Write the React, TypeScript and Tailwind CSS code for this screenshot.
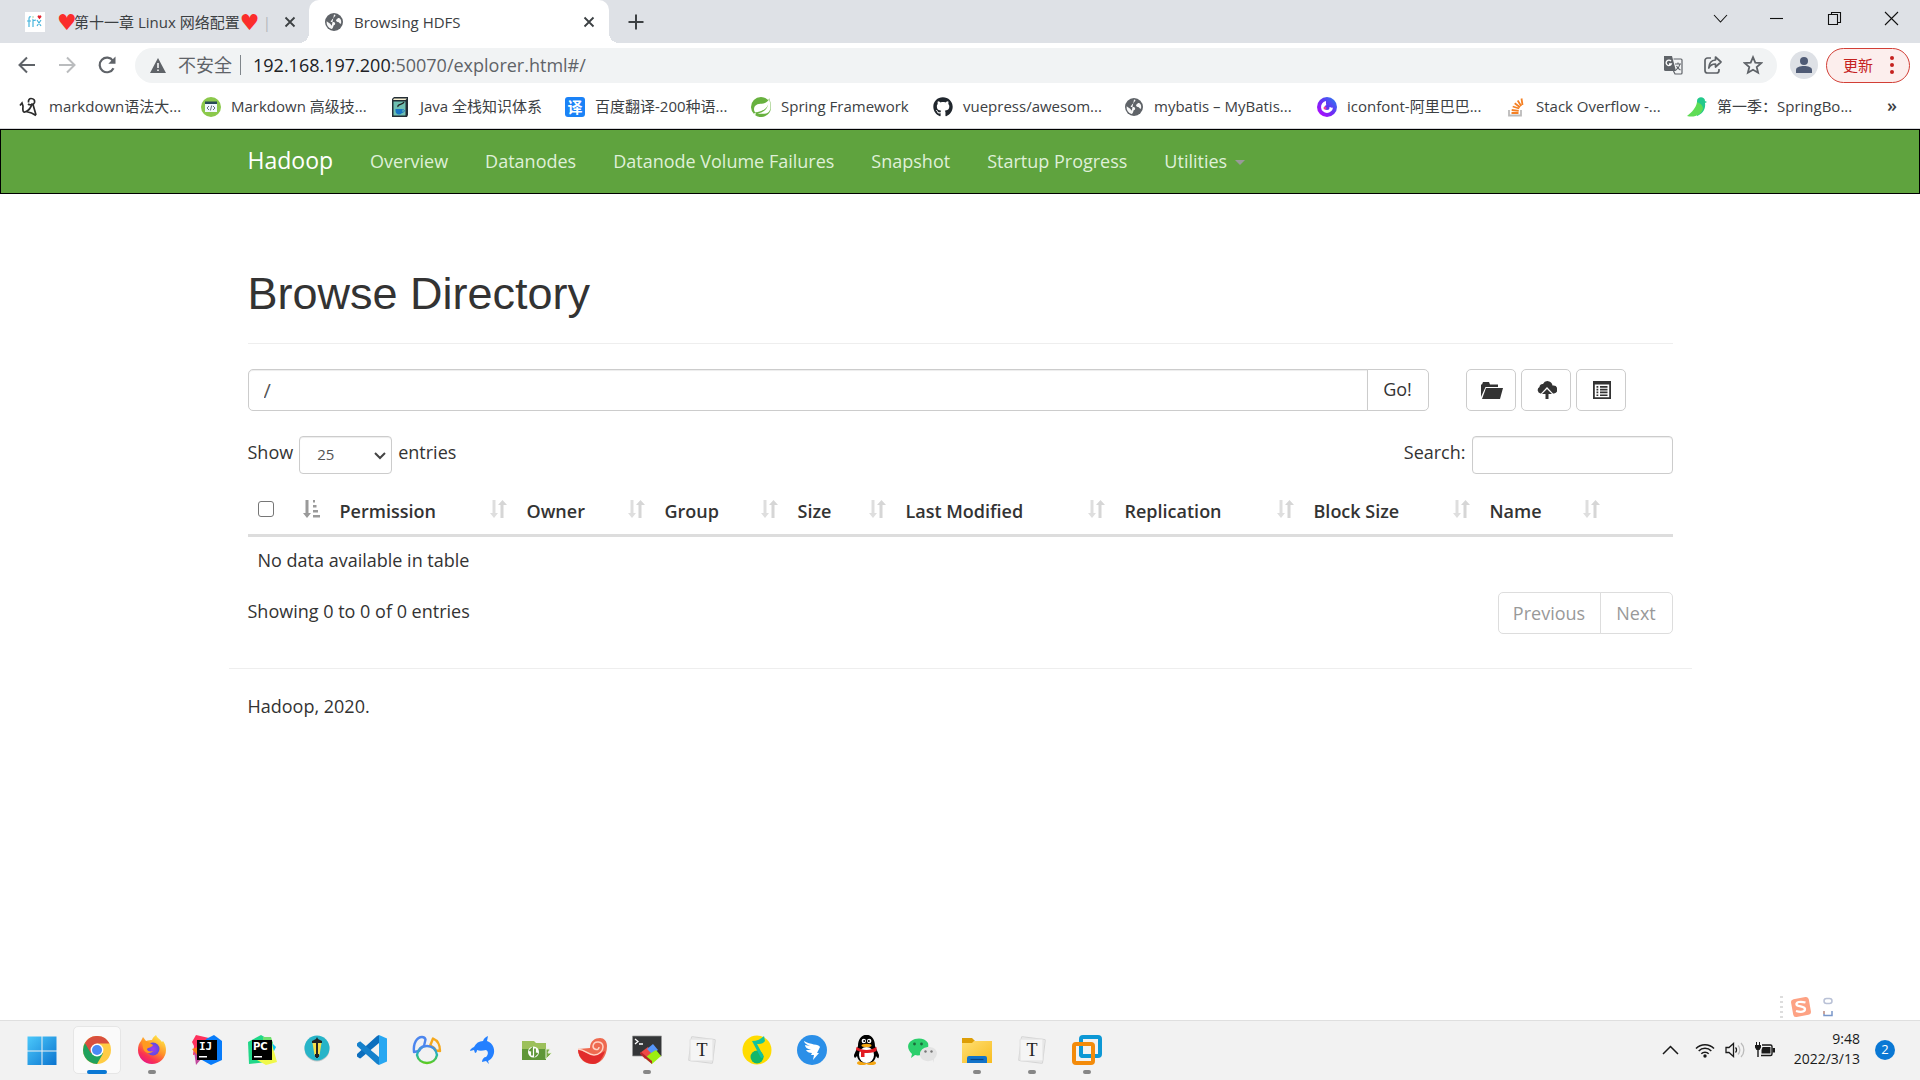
import type { ReactNode } from "react";
import { FaGithub } from "react-icons/fa";
import { SiSpring } from "react-icons/si";

const uiFont = "font-['Open_Sans','Noto_Sans_CJK_SC',sans-serif]";

function Globe() {
  return (
    <svg viewBox="0 0 20 20" className="size-5">
      <circle cx="10" cy="10" r="9" fill="#5f6368" />
      <path d="M10 2.6c2.2.2 1.5 1.8.3 2.3-1 .5-.2 1.6-1.5 1.9-1.2.4-.5 1.7-1.7 1.9-1 .2-.2 1.500 1 1.400 1.500-.1 3 .3 3.100 1.600.1 1.200-1.600 1.200-1.800 2.200-.2 1.300-.9 2.900-2 3A7.500 7.500 0 0 1 2.600 9.300l3.600 2.500c.8.6.6 1.600 1.600 1.800" fill="#fff" opacity=".95" />
      <path d="M13.600 6.400c1.200-.9 2-.3 2.900.8.8 1.300.9 3.200.4 4.500-1.300.3-1.500-1.600-3-1.700-1.400-.2-2.200-1.300-1.700-2.200.3-.7 1-.8 1.400-1.400z" fill="#fff" opacity=".95" />
    </svg>
  );
}

function CloseIcon() {
  return (
    <svg viewBox="0 0 12 12" className="size-3" stroke="#3c4043" strokeWidth="1.8" fill="none">
      <path d="M1.5 1.5l9 9M10.5 1.5l-9 9" />
    </svg>
  );
}

function Heart() {
  return <span className="w-[17px] text-center font-['DejaVu_Sans',sans-serif] text-[22px] leading-5 text-[#fb2d2b]">♥</span>;
}

function TabStrip() {
  return (
    <header className="flex h-[43px] bg-[#dee1e6] text-[15px] text-[#3c4043]">
      <div className="flex w-[309px] items-center pl-[25px]">
        <svg viewBox="0 0 20 20" className="size-5 shrink-0">
          <rect width="20" height="20" fill="#fff" />
          <path d="M6 5C4 4 4 6 4 8v7M2 9h4M8 15V8c1 1 2 0 3 0M12 8l4 6M16 8l-4 6" fill="none" stroke="#46b4dc" strokeWidth="1.2" />
          <path d="M14.5 7.2L12.8 5.200a1.100 1.100 0 0 1 1.700-1.400 1.100 1.100 0 0 1 1.700 1.400z" fill="#e2202c" />
          <circle cx="8" cy="5" r=".8" fill="#9dd28e" />
        </svg>
        <div className="ml-3 flex flex-1 items-center whitespace-nowrap pt-0.5">
          <Heart />
          <span>第十一章 Linux 网络配置</span>
          <Heart />
          <span className="pl-1.5 text-[#b3b6bb]">|</span>
        </div>
        <button aria-label="Close tab" className="mr-[13px]"><CloseIcon /></button>
      </div>
      <div className="relative flex w-[300px] items-center rounded-t-[10px] bg-white pl-[15px]">
        <span className="absolute bottom-0 -left-2.5 size-2.5 bg-[radial-gradient(circle_at_0_0,transparent_10px,white_10px)]" />
        <span className="absolute -right-2.5 bottom-0 size-2.5 bg-[radial-gradient(circle_at_100%_0,transparent_10px,white_10px)]" />
        <Globe />
        <span className="ml-2.5 flex-1 pt-0.5">Browsing HDFS</span>
        <button aria-label="Close tab" className="mr-[14px]"><CloseIcon /></button>
      </div>
      <button aria-label="New tab" className="ml-[19px]">
        <svg viewBox="0 0 16 16" className="size-4" stroke="#3c4043" strokeWidth="2"><path d="M8 .5v15M.5 8h15" /></svg>
      </button>
      <div className="ml-auto flex pb-1.5">
        {[
          ["Search tabs", "M1 5l6.500 7L14 5"],
          ["Minimize", "M0 8.500h13"],
          ["Restore", "M1.500 4.500h9v10h-9zM4.500 4.500v-2h9v10h-3"],
          ["Close", "M1 2l13 13M14 2L1 15"],
        ].map(([name, d]) => (
          <button key={name} aria-label={name} className="grid w-[57px] place-items-center">
            <svg viewBox="0 0 15 17" className="h-[17px] w-[15px]" fill="none" stroke="#111" strokeWidth="1.1"><path d={d} /></svg>
          </button>
        ))}
      </div>
    </header>
  );
}

function Toolbar() {
  return (
    <div className="flex h-11 items-center bg-white pr-2.5 pl-[17px] text-[#5f6368]">
      <button aria-label="Back" className="mr-5">
        <svg viewBox="0 0 20 20" className="size-5" fill="none" stroke="#5f6368" strokeWidth="2"><path d="M18 10H3M10 2.500L2.500 10l7.500 7.500" /></svg>
      </button>
      <button aria-label="Forward" className="mr-5">
        <svg viewBox="0 0 20 20" className="size-5" fill="none" stroke="#babcbe" strokeWidth="2"><path d="M2 10h15M10 2.500l7.500 7.500-7.500 7.500" /></svg>
      </button>
      <button aria-label="Reload" className="mr-[18px]">
        <svg viewBox="0 0 20 20" className="size-5" fill="none" stroke="#5f6368" strokeWidth="2.200">
          <path d="M16.500 13.200A7.300 7.300 0 1 1 16 5.800" /><path d="M18.500 1.500v7.200h-7.200z" fill="#5f6368" stroke="none" />
        </svg>
      </button>
      <div className="flex h-[35px] flex-1 items-center rounded-full bg-[#f1f3f4] pl-[15px] text-lg">
        <svg viewBox="0 0 16 15" className="h-[15px] w-4 shrink-0"><path d="M8 0l8 15H0z" fill="#5f6368" /><path d="M8 5v5M8 11.500v1.600" stroke="#fff" strokeWidth="1.500" /></svg>
        <span className="ml-3">不安全</span>
        <span className="mx-2 h-5 w-px bg-[#80868b]" />
        <label htmlFor="url" className="ml-1 text-[#202124]">192.168.197.200</label>
        <input id="url" defaultValue=":50070/explorer.html#/" className="min-w-0 flex-1 bg-transparent outline-none" />
        <button aria-label="Translate" className="mr-5">
          <svg viewBox="0 0 20 20" className="size-5">
            <path d="M1 1h8l4 15H2.500A1.500 1.500 0 0 1 1 14.500z" fill="#5f6368" />
            <path d="M10.500 4H18a1 1 0 0 1 1 1v13a1 1 0 0 1-1 1h-6l-1.500-3" fill="none" stroke="#5f6368" strokeWidth="1.200" />
            <path d="M8 6.200A2.700 2.700 0 1 0 8.300 9H6" fill="none" stroke="#fff" strokeWidth="1.300" />
            <path d="M12 9h6M15 7.500V9M17 9c-.5 2.500-2 4.500-4 6M13.500 11c1 2 2 3 4 4" fill="none" stroke="#5f6368" strokeWidth="1.100" />
          </svg>
        </button>
        <button aria-label="Share" className="mr-5">
          <svg viewBox="0 0 20 20" className="size-5" fill="none" stroke="#5f6368" strokeWidth="1.700" strokeLinejoin="round">
            <path d="M8 3H4.500A2.500 2.500 0 0 0 2 5.500v10A2.500 2.500 0 0 0 4.500 18h9a2.500 2.500 0 0 0 2.500-2.500V14" />
            <path d="M12.500 2l5.500 5-5.500 5V9C9 9 7 10.500 5.800 13 6 8.500 8.500 5.300 12.500 5z" />
          </svg>
        </button>
        <button aria-label="Bookmark this page" className="mr-[14px]">
          <svg viewBox="0 0 20 20" className="size-5" fill="none" stroke="#5f6368" strokeWidth="1.800"><path d="M10 2.200l2.300 5.400 5.900.5-4.500 3.900 1.400 5.700-5.100-3-5.100 3L6.300 12 1.800 8.100l5.900-.5z" /></svg>
        </button>
      </div>
      <button aria-label="Profile" className="mr-2 ml-[13px] grid size-7 place-items-center rounded-full bg-[#dee1e6]">
        <svg viewBox="0 0 16 16" className="size-4" fill="#4f5b75"><circle cx="8" cy="4" r="4" /><path d="M0 16v-3c0-3 4-4 8-4s8 1 8 4v3z" /></svg>
      </button>
      <button className="flex h-[35px] w-[84px] items-center rounded-full border-[1px] border-[#d23f36] bg-[#fceeed] pl-4 text-[15px] text-[#c5221f]">
        更新
        <svg viewBox="0 0 4 20" className="ml-[17px] h-5 w-1" fill="#c5221f"><circle cx="2" cy="3" r="2" /><circle cx="2" cy="10" r="2" /><circle cx="2" cy="17" r="2" /></svg>
      </button>
    </div>
  );
}

const bookmarks: { label: string; width: string; icon: ReactNode }[] = [
  {
    label: "markdown语法大...", width: "w-[182px]",
    icon: <svg viewBox="0 0 20 20" className="size-5" fill="none" stroke="#2c2c2c" strokeWidth="1.700"><path d="M12 1.500c3 0 4 2 3.500 4-.6 2-4.500 3-6.500 1.500M9.500 5.500c-.3-2.500 1-4 2.500-4M1 8.500l2-2.500 1 3C3.500 14 4 15.500 6 15c3-1 6-4 7-8.500M14 7.500L17 18M7 14.500c3 .5 6 1 10 4" /></svg>,
  },
  {
    label: "Markdown 高级技...", width: "w-[189px]",
    icon: <svg viewBox="0 0 20 20" className="size-5"><circle cx="10" cy="10" r="10" fill="#8bc84b" /><rect x="4" y="5" width="12" height="10" fill="#f1f7ff" /><path d="M4 4.500h12V7H4z" fill="#274a57" /><path d="M8 9l-2 2 2 2M12 9l2 2-2 2M10.700 8.500l-1.300 5" fill="none" stroke="#68727b" /></svg>,
  },
  {
    label: "Java 全栈知识体系", width: "w-[175px]",
    icon: <svg viewBox="0 0 20 20" className="size-5"><path d="M2 2l2-2h14v18l-1 2H2z" fill="#242e36" /><path d="M4 1.500h13L15.500 3H3z" fill="#f6efd2" /><path d="M3.500 4.500h12v14h-12z" fill="#6fbfb2" /><path d="M5.500 12h7v2c0 2-1.500 3.500-3.500 3.500S5.500 16 5.500 14z" fill="#1774c5" /><path d="M8 10c-1-3 5-2 6-5" stroke="#222" strokeWidth="1.300" fill="none" /><path d="M12.500 12.500c3 0 2 3-.5 3" stroke="#1774c5" fill="none" /></svg>,
  },
  {
    label: "百度翻译-200种语...", width: "w-[186px]",
    icon: <span className="grid size-5 place-items-center rounded-[3px] bg-[#1a82f7] text-[15px] leading-5 font-bold text-white">译</span>,
  },
  { label: "Spring Framework", width: "w-[182px]", icon: <SiSpring className="size-5 text-[#68b13f]" /> },
  { label: "vuepress/awesom...", width: "w-[191px]", icon: <FaGithub className="size-5 text-[#20262d]" /> },
  { label: "mybatis – MyBatis...", width: "w-[193px]", icon: <Globe /> },
  {
    label: "iconfont-阿里巴巴...", width: "w-[189px]",
    icon: <svg viewBox="0 0 20 20" className="size-5"><defs><linearGradient id="ifont" x1="0" y1="1" x2="1" y2="0"><stop offset="0" stopColor="#c400ff" /><stop offset=".5" stopColor="#6a2df5" /><stop offset="1" stopColor="#2389ee" /></linearGradient></defs><circle cx="10" cy="10" r="10" fill="url(#ifont)" /><path d="M9 4a6 6 0 1 0 7 6.500c-1 .5-2 .3-3-.5a3.500 3.500 0 0 1-4-3z" fill="#fff" /><circle cx="10" cy="10.500" r="2.500" fill="#5a38f0" /><circle cx="8" cy="11" r="1.500" fill="#ef3a9d" /></svg>,
  },
  { label: "Stack Overflow -...", width: "w-[181px]", icon: <svg viewBox="0 0 20 20" className="size-5" fill="none" strokeWidth="1.800"><path d="M3 13v5.500h12V13" stroke="#bcbbbb" /><path d="M5.500 16h7M5.700 13l7 .8M6.700 9.500l6.500 2M8.700 6.200l5.300 4M11.700 3.500l3.500 5.500M15.500 1.500l1 6.500" stroke="#f48024" /></svg> },
  {
    label: "第一季：SpringBo...", width: "w-[190px]",
    icon: <svg viewBox="0 0 20 20" className="size-5"><path d="M10 4c0-5 8-5 8 0l2 1-2 1c1 7-3 11-8 13z" fill="#23c98b" /><path d="M10 5C9 11 5 15 0 19c7 2 15-1 16-8-1-4-4-5-6-6z" fill="#5fdc55" /></svg>,
  },
];

function BookmarkBar() {
  return (
    <nav aria-label="Bookmarks" className="flex h-[42px] items-center overflow-hidden border-b border-[#d5d7da] bg-white pb-0.5 pl-[19px] text-[15px] text-[#3c4043]">
      {bookmarks.map((b) => (
        <a key={b.label} href="#" className={`flex shrink-0 items-center gap-2.5 whitespace-nowrap ${b.width}`}>
          <span className="shrink-0">{b.icon}</span>
          <span>{b.label}</span>
        </a>
      ))}
      <button aria-label="More bookmarks" className="ml-2.5 pb-1 text-lg font-semibold">»</button>
    </nav>
  );
}

function SiteNav() {
  return (
    <nav className="border border-black bg-[#5fa33e]">
      <div className="mx-auto flex h-[63px] max-w-[1425px] items-center gap-[37px] pb-0.5 text-lg text-[#dff0d8]">
        <a href="#" className="text-[23px] text-white">Hadoop</a>
        {["Overview", "Datanodes", "Datanode Volume Failures", "Snapshot", "Startup Progress"].map((t) => (
          <a key={t} href="#">{t}</a>
        ))}
        <button className="flex items-center gap-2">
          Utilities
          <span className="mt-1 border-x-5 border-t-5 border-x-transparent border-t-[#999]" />
        </button>
      </div>
    </nav>
  );
}

function SortIcon() {
  return (
    <svg viewBox="0 0 18 18" className="h-[18px] w-[18px] shrink-0" fill="#d6d6d6">
      <path d="M3.500 0h3v13H9l-4 5-4-5h2.500z" opacity=".8" />
      <path d="M11.500 18h3V5H18l-4.500-5L9 5h2.500z" />
    </svg>
  );
}

const columns: [string, string][] = [
  ["Permission", "w-[187px]"],
  ["Owner", "w-[138px]"],
  ["Group", "w-[133px]"],
  ["Size", "w-[108px]"],
  ["Last Modified", "w-[219px]"],
  ["Replication", "w-[189px]"],
  ["Block Size", "w-[176px]"],
  ["Name", "w-[130px]"],
];

const squareButton = "grid h-[42px] w-[50px] place-items-center rounded-[5px] border border-[#ccc] pl-0.5 text-[#333]";

function Explorer() {
  return (
    <main className="mx-auto w-full max-w-[1425px] text-lg text-[#333]">
      <h1 className="mt-[75px] border-b border-[#eee] pb-[24px] font-['Liberation_Sans',Arial,sans-serif] text-[45px] leading-[50px]">Browse Directory</h1>
      <div className="mt-[25px] flex">
        <input aria-label="Directory" defaultValue="/" className="h-[42px] min-w-0 flex-1 rounded-l-[5px] border border-[#ccc] px-[15px] text-xl text-[#555] shadow-[inset_0_1px_1px_rgba(0,0,0,0.075)]" />
        <button className="-ml-px h-[42px] w-[62px] rounded-r-[5px] border border-[#ccc] pb-0.5 text-[#333]">Go!</button>
        <div className="ml-[37px] flex w-[207px] gap-[5px]">
          <button aria-label="Create directory" className={squareButton}>
            <svg viewBox="0 0 22 17" className="h-[17px] w-[22px]" fill="currentColor"><path d="M0 15V2.500h1L2 0h6l1 2.500h8V5H4.500z" /><path d="M5 6h17l-3 11H1z" /></svg>
          </button>
          <button aria-label="Upload files" className={squareButton}>
            <svg viewBox="0 0 20 18" className="h-[18px] w-5" fill="currentColor"><path d="M3.500 12.500A3.500 3.500 0 0 1 2.500 6 3 3 0 0 1 6 3a5 5 0 0 1 9.500 1.500A4 4 0 0 1 17 12.500h-1L10 6l-6 6.500z" /><path d="M10 8l5 5h-3.500v5h-3v-5H5z" /></svg>
          </button>
          <button aria-label="Cut and paste" className={squareButton}>
            <svg viewBox="0 0 18 18" className="size-[18px]" fill="currentColor"><path fillRule="evenodd" d="M0 0h18v18H0zM1.800 3.500v12.700h14.400V3.500zM3.500 5h1.800v1.700H3.500zm3.500 0h7.500v1.700H7zM3.500 7.800h1.800v1.700H3.500zm3.500 0h7.500v1.700H7zm-3.500 2.800h1.800v1.700H3.500zm3.500 0h7.500v1.700H7zm-3.500 2.800h1.800V15H3.500zm3.500 0h7.500V15H7z" /></svg>
          </button>
        </div>
      </div>
      <div className="mt-[25px] flex justify-between">
        <div className="flex gap-1.5">
          <label htmlFor="len" className="mt-0.5">Show</label>
          <div className="relative">
            <select id="len" className="h-[38px] w-[93px] appearance-none rounded-[4px] border border-[#ccc] pl-[17px] text-[15px] text-[#555] shadow-[inset_0_1px_1px_rgba(0,0,0,0.075)]"><option>25</option></select>
            <svg viewBox="0 0 12 8" className="pointer-events-none absolute top-4 right-1.5 h-2 w-3" fill="none" stroke="#444" strokeWidth="2"><path d="M1 1l5 5 5-5" /></svg>
          </div>
          <span className="mt-0.5">entries</span>
        </div>
        <div className="flex gap-1.5">
          <label htmlFor="search" className="mt-0.5">Search:</label>
          <input id="search" className="h-[38px] w-[201px] rounded-[4px] border border-[#ccc] px-3 shadow-[inset_0_1px_1px_rgba(0,0,0,0.075)]" />
        </div>
      </div>
      <table className="mt-[10px] w-full table-fixed border-separate border-spacing-0 text-left">
        <thead>
          <tr className="h-[53px] *:border-b-3 *:border-[#ddd]">
            <th className="w-[82px] px-2.5">
              <div className="flex items-center justify-between">
                <input type="checkbox" aria-label="Select all" className="size-4 appearance-none rounded-[3px] border border-[#767676] bg-white" />
                <svg viewBox="0 0 18 18" className="size-[18px]" fill="#9a9a9a"><path d="M3.500 0h3v13H9l-4 5-4-5h2.500z" /><path d="M11 0h2v2.500h-2zM11 5h3.500v2.500H11zM11 10h5v2.500h-5zM11 15h7v2.500h-7z" /></svg>
              </div>
            </th>
            {columns.map(([name, w]) => (
              <th key={name} className={`px-2.5 font-semibold ${w}`}>
                <div className="flex items-center justify-between whitespace-nowrap"><span className="pt-1">{name}</span><SortIcon /></div>
              </th>
            ))}
            <th />
          </tr>
        </thead>
        <tbody>
          <tr><td colSpan={10} className="h-[45px] px-2.5">No data available in table</td></tr>
        </tbody>
      </table>
      <div className="mt-[10px] flex items-start justify-between">
        <p className="mt-[5px]">Showing 0 to 0 of 0 entries</p>
        <div className="flex text-[#999]">
          <button className="h-[42px] w-[103px] rounded-l-[5px] border border-[#ddd]">Previous</button>
          <button className="-ml-px h-[42px] w-[73px] rounded-r-[5px] border border-[#ddd]">Next</button>
        </div>
      </div>
      <footer className="-mx-[19px] mt-[34px] border-t border-[#eee] px-[19px] pt-[23px]">Hadoop, 2020.</footer>
    </main>
  );
}

const typoraPage = (
  <svg viewBox="0 0 30 30" className="size-[30px]"><rect x="3" y="3" width="24" height="24" rx="1" fill="#eee" stroke="#d4d4d4" transform="rotate(7 15 15)" /><rect x="3" y="4" width="23" height="22" rx="1" fill="#f5f5f5" stroke="#e0e0e0" /><text x="15" y="21" fontSize="18" textAnchor="middle" fontFamily="Liberation Serif" fill="#222">T</text></svg>
);

const apps: { name: string; running?: boolean; active?: boolean; icon: ReactNode }[] = [
  { name: "Start", icon: <svg viewBox="0 0 30 30" className="size-[30px]"><defs><linearGradient id="win" x1="0" y1="0" x2="1" y2="1" gradientUnits="objectBoundingBox"><stop offset="0" stopColor="#4cc9fb" /><stop offset="1" stopColor="#0a73cf" /></linearGradient></defs><path d="M.5 1.500h14v14H.5zM15.500 1.500h14v14h-14zM.5 16.500h14v14H.5zM15.500 16.500h14v14h-14z" fill="url(#win)" /></svg> },
  {
    name: "Chrome", active: true,
    icon: <svg viewBox="0 0 28 28" className="size-7"><circle cx="14" cy="14" r="14" fill="#fc4" /><path d="M14 14L1.900 7A14 14 0 0 0 14 28l6-10.500z" fill="#1fa15d" /><path d="M14 7.600h12.500A14 14 0 0 0 1.900 7L8 17.500z" fill="#d94f3e" /><circle cx="14" cy="14" r="6.400" fill="#fff" /><circle cx="14" cy="14" r="5" fill="#4a8af4" /></svg>,
  },
  {
    name: "Firefox", running: true,
    icon: <svg viewBox="0 0 28 29" className="h-[29px] w-7"><defs><linearGradient id="ff" x1=".8" y1="0" x2=".2" y2="1"><stop offset="0" stopColor="#fff14a" /><stop offset=".45" stopColor="#ff9228" /><stop offset=".75" stopColor="#fb3450" /><stop offset="1" stopColor="#e4108e" /></linearGradient><radialGradient id="ffc"><stop offset="0" stopColor="#a63bf0" /><stop offset="1" stopColor="#5c4be0" /></radialGradient></defs><path d="M3 6l2-4 3 4c2-1 5-1 6-1 1-3 3-4 4-5 1 3 4 4 6 7l1-1c3 4 3 8 3 9a14 14 0 0 1-28 0c0-4 1-7 3-9z" fill="url(#ff)" /><circle cx="15" cy="14" r="6.500" fill="url(#ffc)" /><path d="M4 7c4-2 6 0 11 3-1 3-5 2-6 4 0 2 3 3 6 2-3 4-9 2-10-3z" fill="#ff9a20" /></svg>,
  },
  {
    name: "IntelliJ IDEA",
    icon: <svg viewBox="0 0 30 30" className="size-[30px]"><path d="M4 0l13 3-7 15-9 2 1-9-2-4z" fill="#fe315d" /><path d="M2 16l8-1v8L4 30z" fill="#c14a9e" /><path d="M0 14l6-2v9z" fill="#f97a12" /><path d="M14 4l8-4 8 6v19l-11 5-9-5z" fill="#087cfa" /><rect x="5" y="5" width="20" height="20" fill="#000" /><text x="7" y="15" fontSize="11" fontWeight="bold" fontFamily="DejaVu Sans Mono" fill="#fff">IJ</text><path d="M7 21h8v1.500H7z" fill="#fff" /></svg>,
  },
  {
    name: "PyCharm",
    icon: <svg viewBox="0 0 30 30" className="size-[30px]"><path d="M1 7l13-7 12 7-6 20-18 2z" fill="#21d789" /><path d="M23 6l6 6-3 6z" fill="#07c3f2" /><path d="M17 5l7-2 2 10 4 14-11 3-9-5z" fill="#f0f84a" /><path d="M16 2l8 0 2 7-10 0z" fill="#6fe070" /><rect x="5" y="5" width="20" height="20" fill="#000" /><text x="6" y="15" fontSize="10" fontWeight="bold" fontFamily="DejaVu Sans" fill="#fff">PC</text><path d="M7 21h8v1.500H7z" fill="#fff" /></svg>,
  },
  {
    name: "Lantern",
    icon: <svg viewBox="0 0 28 28" className="-mt-1 size-7"><circle cx="14" cy="15" r="12.500" fill="#8c9a9c" opacity=".5" /><circle cx="14" cy="14" r="12.500" fill="#27b4c8" /><path d="M9.500 9h9l-2 12h-5z" fill="#f6e04a" /><path d="M9 7l4-2 1-2 1 2 4 2v2H9zM13 9h2v15h-2zM12 20h4v3h-4z" fill="#222" /></svg>,
  },
  {
    name: "Visual Studio Code",
    icon: <svg viewBox="0 0 30 30" className="size-[30px]"><path d="M22 0v8L4 23c-1 1-2 0-4-1.500V19L20 1z" fill="#0c6ebd" /><path d="M22 30v-8L4 7C3 6 2 7 0 8.500V11l20 18z" fill="#1581cc" /><path d="M22 0l8 3.500v23L22 30z" fill="#27a7f2" /></svg>,
  },
  {
    name: "Navicat",
    icon: <svg viewBox="0 0 30 30" className="size-[30px]" fill="none" strokeWidth="2.400" strokeLinejoin="round"><defs><linearGradient id="nv" x1="0" y1="0" x2="0" y2="1"><stop offset="0" stopColor="#4c86ee" /><stop offset=".5" stopColor="#24b6b0" /><stop offset="1" stopColor="#5ccb20" /></linearGradient></defs><path d="M2 17C1 8 5 2 10 2c2 0 3 1 3.500 2.500L12 11c-3 1-4 3-5 5z" stroke="#4c86ee" /><path d="M18 11l3-7.500c5 2 7 7 7 12.500l-4-.5c-1-2-3-4-6-4.500z" stroke="#f5a81c" /><path d="M5 20c1-6 5-9 10-9s9 3 10 9c-1 5-5 8-10 8s-9-3-10-8z" stroke="url(#nv)" /></svg>,
  },
  {
    name: "DBeaver dolphin",
    icon: <svg viewBox="0 0 28 28" className="size-7" fill="#2480ff"><path d="M2 15c0-2 2-3 4-4 2-4 5-6 9-6 1-3 3-4 5-5l-1 5c6 2 9 9 6 15-1 2-3 4-5 5l1 3-3-3-4 1c0-3 2-5 4-5 3-3 2-6 0-7-4 1-7 1-9 0 0 2-1 3-2 3l-1-3z" /></svg>,
  },
  {
    name: "FTP folder",
    icon: <svg viewBox="0 0 30 30" className="size-[30px]"><path d="M0 6h12l2 2h10v17H0z" fill="#9cc05b" /><path d="M0 14h24v11H0z" fill="#5f9738" /><path d="M24 14h4l-2 4h4l-6 6z" fill="#7aaa47" stroke="#e9f3dd" /><circle cx="11.500" cy="17" r="5.500" fill="#fff" /><path d="M10 20.500v-7L7.500 16M13 13.500v7l2.500-2.500" fill="none" stroke="#5f9738" strokeWidth="1.800" /></svg>,
  },
  {
    name: "Xshell",
    icon: <svg viewBox="0 0 30 30" className="size-[30px]"><path d="M1 14l12-1c0-7 5-10 10-10 4 0 7 3 7 8 0 11-7 18-14 18S1 25 1 14z" fill="#ee6a50" /><path d="M1 14l7 3c8 4 15 2 20-1-3 9-7 13-12 13S1 25 1 14z" fill="#e22b2c" /><path d="M1 14c8 1 10 6 16 6 5 0 9-4 9-8 0-6-9-7-10-1 0 4 6 5 6 1" fill="none" stroke="#ffd3c4" strokeWidth="1.500" /></svg>,
  },
  {
    name: "MobaXterm", running: true,
    icon: <svg viewBox="0 0 30 30" className="size-[30px]"><path d="M.5 1h29v20H.5z" fill="#343638" stroke="#999" strokeWidth=".7" /><path d="M3 4l3 2.500L3 9M7 9h4" stroke="#fff" strokeWidth="1.300" fill="none" /><path d="M8 18l8-6 4 6-7 6z" fill="#ee4a46" /><path d="M15 14l6-5 5 6-6 4z" fill="#5696fa" /><path d="M19 18l5-3 5 6-9 8-7-6z" fill="#9cf010" /><path d="M8 19l12 10v-3L9 17z" fill="#b4262a" /></svg>,
  },
  { name: "Typora", icon: typoraPage },
  {
    name: "QQ Music",
    icon: <svg viewBox="0 0 30 30" className="size-[30px]"><circle cx="15" cy="15" r="14.500" fill="#ffdc00" /><circle cx="15" cy="22" r="6.500" fill="#12b76a" /><path d="M10 6c5 0 9-2 12-5l1 5c-2 3-5 3-8 3l7 13-3 1z" fill="#12c2a0" /></svg>,
  },
  {
    name: "DingTalk",
    icon: <svg viewBox="0 0 30 30" className="size-[30px]"><circle cx="15" cy="15" r="15" fill="#2b8fe8" /><path d="M7 6c6 4 15 3 16 6l-3 6h2l-6 7 1-5h-3l1-2c-3 0-5-1-6-3l5 0c-4-1-6-3-6-5l5 1C9 9 7 8 7 6z" fill="#fff" /></svg>,
  },
  {
    name: "QQ",
    icon: <svg viewBox="0 0 26 30" className="h-[30px] w-[26px]"><ellipse cx="8" cy="28" rx="5" ry="2" fill="#f5a714" /><ellipse cx="17" cy="28" rx="5" ry="2" fill="#f5a714" /><path d="M4 11C4-4 21-4 21 11l4 9c0 4-1 4-3 1-1 5-4 7-9 7s-9-2-10-7c-2 3-3 2-3-1z" fill="#000" /><ellipse cx="12.500" cy="20" rx="7.500" ry="8" fill="#fff" /><path d="M2.500 12c7 4 13 4 20 0v4c-4 2-8 2-12 2v4H7v-5l-5-2z" fill="#e11b22" /><circle cx="9.800" cy="6" r="2.200" fill="#fff" /><circle cx="15.200" cy="6" r="2.200" fill="#fff" /><circle cx="10.200" cy="6" r="1" /><circle cx="14.800" cy="6" r="1" /><ellipse cx="12.500" cy="10.500" rx="5" ry="1.700" fill="#f5a714" /></svg>,
  },
  {
    name: "WeChat",
    icon: <svg viewBox="0 0 30 30" className="size-[30px]"><path d="M4 23l1-4C-8 6 15-2 21 8c2 8-6 14-13 12z" fill="#2ccf6c" /><circle cx="7.500" cy="9" r="1.400" fill="#1b6b3b" /><circle cx="14.500" cy="9" r="1.400" fill="#1b6b3b" /><path d="M27 28l-1-3c-6 3-14 0-13-7 2-8 16-8 17 0 0 3-2 5-3 6z" fill="#e3e3e3" /><circle cx="18.500" cy="16.500" r="1.200" fill="#777" /><circle cx="24.500" cy="16.500" r="1.200" fill="#777" /></svg>,
  },
  {
    name: "File Explorer", running: true,
    icon: <svg viewBox="0 0 30 30" className="size-[30px]"><defs><linearGradient id="fe" x1="0" y1="0" x2="1" y2="1"><stop offset="0" stopColor="#ffdf73" /><stop offset="1" stopColor="#f8bc1f" /></linearGradient></defs><path d="M0 3h10l3 3v4H0z" fill="#dd9e07" /><path d="M0 8h10l2-2h18v22H0z" fill="url(#fe)" /><path d="M5 28v-5a2 2 0 0 1 2-2h16a2 2 0 0 1 2 2v5z" fill="#1273c9" /><path d="M8.500 24.500h13" stroke="#0a4584" strokeWidth="1.200" /></svg>,
  },
  { name: "Typora document", running: true, icon: typoraPage },
  {
    name: "VMware Workstation", running: true,
    icon: <svg viewBox="0 0 30 30" className="size-[30px]" fill="none" strokeWidth="4"><rect x="9" y="2" width="19" height="19" rx="2" stroke="#0d98d5" /><rect x="2" y="9" width="19" height="19" rx="2" stroke="#f38b0b" /><path d="M9 12v7a2 2 0 0 0 2 2h6" stroke="#0d98d5" /></svg>,
  },
];

function Taskbar() {
  return (
    <footer className="flex h-[60px] items-center border-t border-[#dfdfdf] bg-[#f2f2f2] pb-0.5 pl-[15px]">
      {apps.map((a) => (
        <button key={a.name} aria-label={a.name} className="relative mr-px grid h-12 w-[54px] shrink-0 place-items-center">
          {a.active && <span className="absolute inset-x-[3px] inset-y-0 rounded-[5px] border border-[#e6e6e6] bg-[#fafafa]" />}
          <span className="relative">{a.icon}</span>
          {a.active && <span className="absolute bottom-0 h-1 w-5 rounded-full bg-[#0a78d4]" />}
          {a.running && <span className="absolute bottom-0 h-1 w-2 rounded-full bg-[#868686]" />}
        </button>
      ))}
      <div className="ml-auto flex items-center pr-[25px]">
        <button aria-label="Show hidden icons" className="mr-4">
          <svg viewBox="0 0 17 10" className="h-2.5 w-[17px]" fill="none" stroke="#1a1a1a" strokeWidth="1.500"><path d="M1 9l7.500-7.500L16 9" /></svg>
        </button>
        <svg aria-label="Wi-Fi" viewBox="0 0 20 16" className="mr-2.5 h-4 w-5" fill="none" stroke="#1a1a1a" strokeWidth="1.500"><path d="M1 6.500a12.500 12.500 0 0 1 18 0M3.700 9a8.800 8.800 0 0 1 12.600 0M6.300 11.700a5.200 5.200 0 0 1 7.400 0" /><circle cx="10" cy="14" r="1.700" fill="#1a1a1a" stroke="none" /></svg>
        <svg aria-label="Volume" viewBox="0 0 20 16" className="mr-2.5 h-4 w-5" fill="none" stroke="#1a1a1a" strokeWidth="1.300"><path d="M1 5.500h3L8.500 1.500v13L4 10.500H1zM10.500 5.500a3.500 3.500 0 0 1 0 5" /><path d="M13 3.500a6.500 6.500 0 0 1 0 9M16 1a10 10 0 0 1 0 14" stroke="#bbb" /></svg>
        <svg aria-label="Battery charging" viewBox="0 0 20 16" className="h-4 w-5" fill="none" stroke="#1a1a1a" strokeWidth="1.400"><path d="M7 3h8.500a1.500 1.500 0 0 1 1.500 1.500v7.500a1.500 1.500 0 0 1-1.500 1.500H6" /><path d="M7.500 5H15.500v6.500H6.500V8z" fill="#1a1a1a" stroke="none" /><path d="M0 3h6v2.500L4.500 8h-3L0 5.500zM1 0h1v3H1zM4 0h1v3H4zM2.300 7h1.400v8H2.300zM17.500 6H20v4.500h-2.500z" fill="#1a1a1a" stroke="none" /></svg>
        <div className="mr-[15px] w-[85px] pb-0.5 text-right text-sm leading-5 text-[#1a1a1a]">
          <div>9:48</div>
          <div>2022/3/13</div>
        </div>
        <span className="grid size-5 place-items-center rounded-full bg-[#0a78d4] text-[13px] text-white">2</span>
      </div>
    </footer>
  );
}

function InputMethodBar() {
  return (
    <div className="mt-auto mr-[86px] flex h-[26px] items-center gap-[7px] self-end">
      <svg viewBox="0 0 4 24" className="h-6 w-1" fill="#ddd"><path d="M0 1h3v2H0zM0 6h3v2H0zM0 11h3v2H0zM0 16h3v2H0zM0 21h3v2H0z" /></svg>
      <svg viewBox="0 0 20 20" className="size-5"><rect x="1" y="1" width="18" height="18" rx="3" fill="#fda284" transform="rotate(-10 10 10)" /><path d="M14.500 5.500C9 4 5 5 5.500 7.500 6 10 14 9 14 12s-4 3.500-9 2" fill="none" stroke="#fff" strokeWidth="2.300" /></svg>
      <svg viewBox="0 0 12 20" className="ml-1 h-5 w-3" fill="none"><rect x="2" y="1.500" width="8" height="5" rx="2.500" stroke="#b9c1d6" strokeWidth="1.500" /><path d="M2 14v4.500h8V14" stroke="#7a97c9" strokeWidth="1.500" /><path d="M2 14v3" stroke="#d8a28a" strokeWidth="1.500" /></svg>
    </div>
  );
}

export default function App() {
  return (
    <div className={`flex min-h-screen flex-col bg-white ${uiFont}`}>
      <TabStrip />
      <Toolbar />
      <BookmarkBar />
      <SiteNav />
      <Explorer />
      <InputMethodBar />
      <Taskbar />
    </div>
  );
}
